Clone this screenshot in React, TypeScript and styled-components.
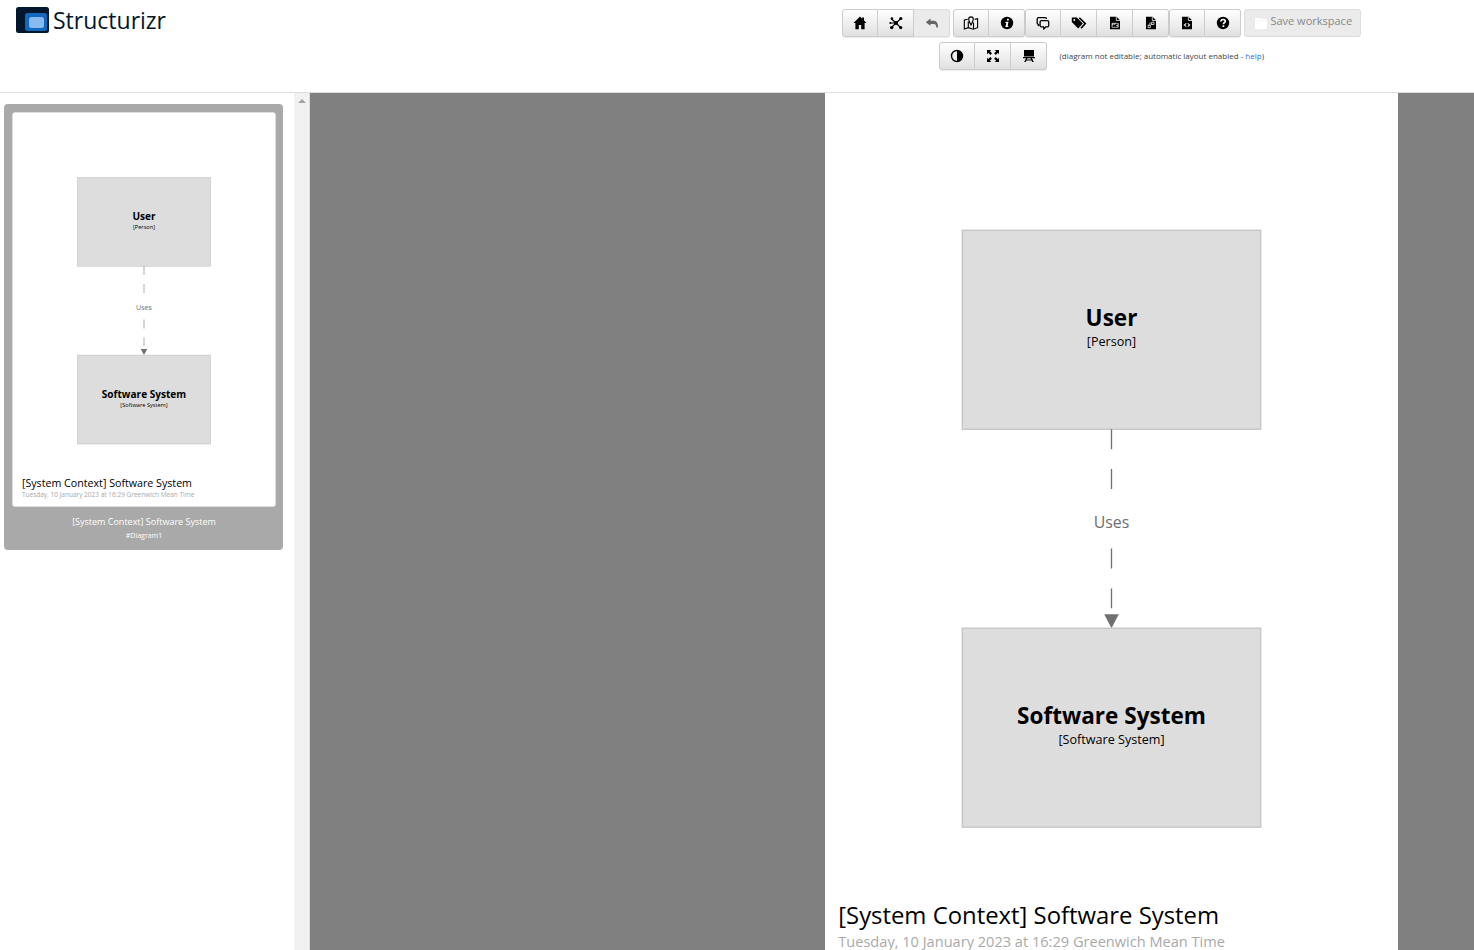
import React from 'react';
import styled, { createGlobalStyle, css } from 'styled-components';

const GlobalStyle = createGlobalStyle`
  * { box-sizing: border-box; }
  html, body, #root { height: 100%; }
  body {
    margin: 0;
    background: #ffffff;
    color: #333333;
    font-family: "Open Sans", "Liberation Sans", sans-serif;
    overflow: hidden;
  }
`;

const Page = styled.div`
  display: flex;
  flex-direction: column;
  height: 100vh;
`;

const Header = styled.header`
  display: grid;
  grid-template-columns: 1fr 1fr;
  flex: none;
  height: 93px;
  padding-right: 5px;
  border-bottom: 1px solid #dddddd;
`;

const Brand = styled.a`
  display: flex;
  align-items: center;
  align-self: start;
  gap: 4px;
  padding: 6px 0 0 16px;
  color: #02172c;
  font-size: 23px;
  line-height: 28px;
  text-decoration: none;
`;

const Toolbar = styled.div`
  display: flex;
  flex-direction: column;
  align-items: center;
  gap: 5px;
  padding-top: 9px;
`;

const ToolbarRow = styled.div<{ $gap: number }>`
  display: flex;
  align-items: center;
  gap: ${(p) => p.$gap}px;
`;

const GroupRun = styled.div`
  display: flex;
`;

const ButtonGroup = styled.div`
  display: flex;
  border-radius: 3px;
  box-shadow: 0 1px 1px rgba(0, 0, 0, 0.08);
`;

const buttonBase = css`
  height: 28px;
  border: 1px solid #cccccc;
  background: linear-gradient(#ffffff, #e0e0e0);
  color: #000000;
  font-family: inherit;
  &:disabled {
    border-color: #dcdcdc;
    background: #ebebeb;
    color: #666666;
  }
`;

const ToolButton = styled.button`
  ${buttonBase}
  display: flex;
  align-items: center;
  justify-content: center;
  width: 36px;
  padding: 0;
  & + & { border-left: 0; }
  &:first-child { border-radius: 3px 0 0 3px; }
  &:last-child { border-radius: 0 3px 3px 0; }
`;

const SaveButton = styled.button`
  ${buttonBase}
  display: flex;
  align-items: center;
  gap: 1px;
  padding: 0 8px;
  border-radius: 3px;
  font-size: 11px;
  line-height: 16px;
  &:disabled { color: #888888; }
`;

const SaveLabel = styled.span`
  padding-bottom: 4px;
`;

const Note = styled.span`
  color: #444444;
  font-size: 8px;
  line-height: 12px;
`;

const HelpLink = styled.a`
  color: #1a73d4;
  text-decoration: none;
`;

const Body = styled.div`
  display: flex;
  flex: 1;
  min-height: 0;
`;

const Sidebar = styled.aside`
  flex: none;
  width: 294px;
  padding: 11px 11px 0 4px;
`;

const ScrollTrack = styled.div`
  display: flex;
  justify-content: center;
  flex: none;
  width: 16px;
  padding-top: 6px;
  border-right: 1px solid #dddddd;
  background: #f1f1f1;
`;

const ThumbCard = styled.figure`
  margin: 0;
  padding: 8px 7px 7px 8px;
  border-radius: 4px;
  background: #a9a9a9;
  color: #ffffff;
  text-align: center;
`;

const ThumbFrame = styled.div`
  padding: 3px;
  border: 1px solid #dddddd;
  border-radius: 3px;
  background: #ffffff;
`;

const ThumbTitle = styled.figcaption`
  padding-top: 8px;
  font-size: 9px;
  line-height: 14px;
`;

const ThumbKey = styled.small`
  display: block;
  font-size: 7px;
  line-height: 14px;
`;

const Canvas = styled.main`
  display: flex;
  justify-content: flex-end;
  align-items: flex-start;
  flex: 1;
  min-width: 0;
  padding-right: 76px;
  background: #808080;
  overflow: hidden;
`;

const Sheet = styled.div`
  flex: none;
  width: 573px;
  background: #ffffff;
`;

const Drawing = styled.svg`
  display: block;
  width: 100%;
  height: auto;
  font-family: "Open Sans", "Liberation Sans", sans-serif;
`;

const Glyph = styled.svg`
  display: block;
  width: 16px;
  height: 16px;
`;

type ElementProps = { y: number; name: string; kind: string };

const DiagramElement = ({ y, name, kind }: ElementProps) => (
  <g textAnchor="middle" fill="#000000">
    <rect x="207" y={y} width="450" height="300" fill="#dddddd" stroke="#c4c4c4" strokeWidth="2" />
    <text x="432" y={y + 145} fontSize="34" fontWeight="700">{name}</text>
    <text x="432" y={y + 175} fontSize="19">{kind}</text>
  </g>
);

const Diagram = () => (
  <Drawing viewBox="0 0 864 1306" role="img" aria-label="System context diagram">
    <DiagramElement y={207} name="User" kind="[Person]" />
    <path d="M432 507v30M432 567v30M432 687v30M432 747v30" stroke="#707070" strokeWidth="2" />
    <path d="M421 786h22l-11 21z" fill="#707070" />
    <text x="432" y="656" fontSize="24" fill="#707070" textAnchor="middle">Uses</text>
    <DiagramElement y={807} name="Software System" kind="[Software System]" />
    <text x="20" y="1253" fontSize="36" fill="#000000">[System Context] Software System</text>
    <text x="20" y="1287" fontSize="22" fill="#a9a9a9">Tuesday, 10 January 2023 at 16:29 Greenwich Mean Time</text>
  </Drawing>
);

const FileShape = () => (
  <>
    <path d="M3 1.800h6.500L13 5.300V14.300H3z" fill="currentColor" />
    <path d="M9.300 2v3.500H13" fill="none" stroke="#f6f6f6" strokeWidth=".8" />
  </>
);

const glyphs: Record<string, React.ReactNode> = {
  home: <path d="M8 1.500L1.500 8h1.900v6.200h3.400V10h2.400v4.200h3.400V8h1.900L12 5.500V2.500h-1.900v1.200z" fill="currentColor" />,
  nodes: (
    <g fill="currentColor" stroke="currentColor">
      <path d="M8 8L3.500 4M8 8l4.500-4M8 8l-4.500 4.500M8 8l4.500 4.500M8 8H2.500" strokeWidth="1.200" />
      <g stroke="none">
        <circle cx="8.200" cy="8" r="1.900" /><circle cx="3.900" cy="3.600" r="1.300" /><circle cx="12.800" cy="3.500" r="1.600" />
        <circle cx="3.700" cy="12.600" r="1.700" /><circle cx="12.700" cy="12.600" r="1.600" /><circle cx="2.300" cy="8" r="1" />
      </g>
    </g>
  ),
  undo: <path d="M6.500 3.500L1.800 7.300l4.700 3.500V8.900h3c1.900 0 2.700.9 2.900 3.600H14C14.300 8 12.500 5.700 9.500 5.700h-3z" fill="currentColor" />,
  map: (
    <g fill="none" stroke="currentColor" strokeWidth="1.100">
      <path d="M4.700 4.200L1.300 5v9l4-1.300 5 1.500 4.300-1.500v-9l-2.900.7M5.300 6.500v6.200M10.500 7.500v6.500" />
      <path d="M8 10C6.500 7.300 5.700 5.800 5.700 4.200a2.300 2.300 0 0 1 4.600 0C10.300 5.800 9.500 7.300 8 10z" />
    </g>
  ),
  info: (
    <g>
      <circle cx="8" cy="8" r="6.200" fill="currentColor" />
      <path d="M8 3.800h1.800v1.800H8zM6.500 6.700h3l-.9 4h.8l-.2 1.200H6.400l.9-4h-.9z" fill="#ffffff" />
    </g>
  ),
  chat: (
    <g fill="none" stroke="currentColor" strokeWidth="1.300" strokeLinejoin="round">
      <path d="M4.500 9.500L3.300 10.600V9.300C2.500 9.300 2.200 8.800 2.200 8V4c0-.8.5-1.300 1.300-1.300h6.800c.8 0 1.200.4 1.200 1.200" />
      <path d="M6.400 5.600h6c.8 0 1.300.5 1.300 1.300v3.600c0 .8-.5 1.300-1.300 1.300h-1.300L8.700 14v-2.200H6.400c-.8 0-1.300-.5-1.300-1.300V6.900c0-.8.5-1.300 1.300-1.300z" />
    </g>
  ),
  tags: (
    <g>
      <path d="M.8 2.500h5l6 6-4.600 5-6.400-6.400z" fill="currentColor" />
      <circle cx="3.300" cy="5" r="1" fill="#f6f6f6" />
      <path d="M8.300 2.700l6 5.900-4.300 4.700" fill="none" stroke="currentColor" strokeWidth="1.600" />
    </g>
  ),
  fileImage: (
    <g>
      <FileShape />
      <path d="M5 8.300h6.300v4H5z" fill="none" stroke="#eeeeee" strokeWidth=".7" />
      <path d="M5.200 8.500h4l-1.500 1.300-1-.6-1.500 1.500zM10.800 9.200v2.600l-1.900-1.300z" fill="#eeeeee" />
    </g>
  ),
  fileVector: (
    <g>
      <FileShape />
      <path d="M5 10.300h2.300v2.300H5zM8.700 7.200H11v2.300H8.700zM7 10.500L9 9M6 10.300c0-1.600.8-2.300 2.500-2.300" fill="none" stroke="#eeeeee" strokeWidth=".8" />
    </g>
  ),
  fileCode: (
    <g>
      <FileShape />
      <path d="M7.300 8.300L5.300 10l2 1.700M8.700 8.300l2 1.700-2 1.700" fill="none" stroke="#eeeeee" strokeWidth="1.100" />
    </g>
  ),
  help: (
    <g>
      <circle cx="8" cy="8" r="6.200" fill="currentColor" />
      <path d="M5.900 6.500c0-1.400.9-2 2.200-2s2.200.7 2.200 1.800c0 1.300-1.900 1.400-1.900 3" fill="none" stroke="#ffffff" strokeWidth="1.600" />
      <path d="M7.500 10.300h1.800V12H7.500z" fill="#ffffff" />
    </g>
  ),
  contrast: (
    <g>
      <circle cx="8" cy="8" r="5.500" fill="none" stroke="currentColor" strokeWidth="1.400" />
      <path d="M8 2.500a5.500 5.500 0 0 1 0 11z" fill="currentColor" />
    </g>
  ),
  expand: (
    <g fill="currentColor">
      <path d="M2 2h4.200L5 3.300l2 2L5.400 6.900l-2-2L2 6.200z" />
      <path d="M14 2v4.200l-1.300-1.300-2 2L9.100 5.300l2-2L9.800 2z" />
      <path d="M2 14V9.800l1.300 1.300 2-2 1.600 1.600-2 2L6.200 14z" />
      <path d="M14 14H9.800l1.300-1.300-2-2 1.600-1.600 2 2L14 9.800z" />
    </g>
  ),
  present: <path d="M3 2h10v6.500H3zM2 9h12v1.200H2zM5 10.200h1.600L4.800 14H3.200zM9.400 10.200H11L12.800 14h-1.600zM5 11.500h6v1H5z" fill="currentColor" />,
  save: <path d="M2 4.500V3h5l1 1h6v1H2zM2 5.500h12V14H2z" fill="#ffffff" />,
};

const Icon = ({ name }: { name: string }) => (
  <Glyph viewBox="0 0 16 16" aria-hidden="true">{glyphs[name]}</Glyph>
);

type Tool = { icon: string; label: string; disabled?: boolean };

const Tools = ({ items }: { items: Tool[] }) => (
  <ButtonGroup>
    {items.map((t) => (
      <ToolButton key={t.icon} type="button" aria-label={t.label} disabled={t.disabled}>
        <Icon name={t.icon} />
      </ToolButton>
    ))}
  </ButtonGroup>
);

const Logo = () => (
  <svg width="33" height="26" viewBox="0 0 33 26" aria-hidden="true">
    <rect width="33" height="26" rx="2.500" fill="#02172c" />
    <rect x="9" y="6" width="22" height="18" rx="2.500" fill="#1168bd" />
    <rect x="13" y="10" width="15" height="11" rx="2.500" fill="#85bbf0" />
  </svg>
);

export default function App() {
  return (
    <Page>
      <GlobalStyle />
      <Header>
        <Brand href="#"><Logo />Structurizr</Brand>
        <Toolbar>
          <ToolbarRow $gap={3}>
            <Tools items={[
              { icon: 'home', label: 'Home' },
              { icon: 'nodes', label: 'Explore' },
              { icon: 'undo', label: 'Undo', disabled: true },
            ]} />
            <GroupRun>
              <Tools items={[
                { icon: 'map', label: 'Key' },
                { icon: 'info', label: 'Information' },
              ]} />
              <Tools items={[
                { icon: 'chat', label: 'Descriptions' },
                { icon: 'tags', label: 'Tags' },
                { icon: 'fileImage', label: 'Export PNG' },
                { icon: 'fileVector', label: 'Export SVG' },
              ]} />
              <Tools items={[
                { icon: 'fileCode', label: 'Embed' },
                { icon: 'help', label: 'Help' },
              ]} />
            </GroupRun>
            <SaveButton type="button" disabled>
              <Icon name="save" />
              <SaveLabel>Save workspace</SaveLabel>
            </SaveButton>
          </ToolbarRow>
          <ToolbarRow $gap={12}>
            <Tools items={[
              { icon: 'contrast', label: 'Dark mode' },
              { icon: 'expand', label: 'Full screen' },
              { icon: 'present', label: 'Presentation' },
            ]} />
            <Note>(diagram not editable; automatic layout enabled - <HelpLink href="#">help</HelpLink>)</Note>
          </ToolbarRow>
        </Toolbar>
      </Header>
      <Body>
        <Sidebar>
          <ThumbCard>
            <ThumbFrame><Diagram /></ThumbFrame>
            <ThumbTitle>
              [System Context] Software System
              <ThumbKey>#Diagram1</ThumbKey>
            </ThumbTitle>
          </ThumbCard>
        </Sidebar>
        <ScrollTrack>
          <svg width="8" height="4" viewBox="0 0 8 4" aria-hidden="true"><path d="M4 0l4 4H0z" fill="#a3a3a3" /></svg>
        </ScrollTrack>
        <Canvas>
          <Sheet><Diagram /></Sheet>
        </Canvas>
      </Body>
    </Page>
  );
}
